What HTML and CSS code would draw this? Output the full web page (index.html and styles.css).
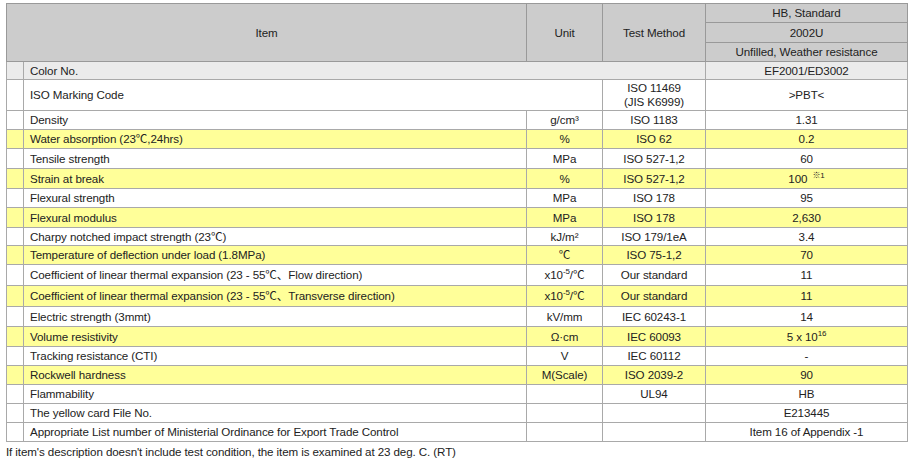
FILE: index.html
```html
<!DOCTYPE html>
<html>
<head>
<meta charset="utf-8">
<link rel="stylesheet" href="styles.css">
</head>
<body>
<div class="wrap">
<table class="spec">
  <colgroup>
    <col class="c-mark"><col class="c-item"><col class="c-unit"><col class="c-test"><col class="c-val">
  </colgroup>
  <thead>
    <tr class="h1">
      <th colspan="2" rowspan="3">Item</th>
      <th rowspan="3">Unit</th>
      <th rowspan="3">Test Method</th>
      <th>HB, Standard</th>
    </tr>
    <tr class="h2"><th>2002U</th></tr>
    <tr class="h3"><th>Unfilled, Weather resistance</th></tr>
  </thead>
  <tbody>
    <tr class="grey r18">
      <td class="mark"></td>
      <td colspan="3" class="item">Color No.</td>
      <td>EF2001/ED3002</td>
    </tr>
    <tr class="tall">
      <td class="mark"></td>
      <td colspan="2" class="item">ISO Marking Code</td>
      <td class="two">ISO 11469<br>(JIS K6999)</td>
      <td>&gt;PBT&lt;</td>
    </tr>
    <tr><td class="mark"></td><td class="item">Density</td><td>g/cm³</td><td>ISO 1183</td><td>1.31</td></tr>
    <tr class="y"><td class="mark"></td><td class="item">Water absorption (23℃,24hrs)</td><td>%</td><td>ISO 62</td><td>0.2</td></tr>
    <tr class="r20"><td class="mark"></td><td class="item">Tensile strength</td><td>MPa</td><td>ISO 527-1,2</td><td>60</td></tr>
    <tr class="y r20"><td class="mark"></td><td class="item">Strain at break</td><td>%</td><td>ISO 527-1,2</td><td>100 <sup class="note">※1</sup></td></tr>
    <tr><td class="mark"></td><td class="item">Flexural strength</td><td>MPa</td><td>ISO 178</td><td>95</td></tr>
    <tr class="y r20"><td class="mark"></td><td class="item">Flexural modulus</td><td>MPa</td><td>ISO 178</td><td>2,630</td></tr>
    <tr class="r18"><td class="mark"></td><td class="item">Charpy notched impact strength (23℃)</td><td>kJ/m²</td><td>ISO 179/1eA</td><td>3.4</td></tr>
    <tr class="y"><td class="mark"></td><td class="item">Temperature of deflection under load (1.8MPa)</td><td>℃</td><td>ISO 75-1,2</td><td>70</td></tr>
    <tr class="r21"><td class="mark"></td><td class="item">Coefficient of linear thermal expansion (23 - 55℃、Flow direction)</td><td>x10<sup>-5</sup>/℃</td><td>Our standard</td><td>11</td></tr>
    <tr class="y r21"><td class="mark"></td><td class="item">Coefficient of linear thermal expansion (23 - 55℃、Transverse direction)</td><td>x10<sup>-5</sup>/℃</td><td>Our standard</td><td>11</td></tr>
    <tr class="r20"><td class="mark"></td><td class="item">Electric strength (3mmt)</td><td>kV/mm</td><td>IEC 60243-1</td><td>14</td></tr>
    <tr class="y r20"><td class="mark"></td><td class="item">Volume resistivity</td><td>Ω·cm</td><td>IEC 60093</td><td>5 x 10<sup>16</sup></td></tr>
    <tr><td class="mark"></td><td class="item">Tracking resistance (CTI)</td><td>V</td><td>IEC 60112</td><td>-</td></tr>
    <tr class="y"><td class="mark"></td><td class="item">Rockwell hardness</td><td>M(Scale)</td><td>ISO 2039-2</td><td>90</td></tr>
    <tr><td class="mark"></td><td class="item">Flammability</td><td></td><td>UL94</td><td>HB</td></tr>
    <tr><td class="mark"></td><td class="item">The yellow card File No.</td><td></td><td></td><td>E213445</td></tr>
    <tr><td class="mark"></td><td class="item">Appropriate List number of Ministerial Ordinance for Export Trade Control</td><td></td><td></td><td>Item 16 of Appendix -1</td></tr>
  </tbody>
</table>
<p class="foot">If item's description doesn't include test condition, the item is examined at 23 deg. C. (RT)</p>
</div>
</body>
</html>
```

FILE: styles.css
```css
html, body {
  margin: 0;
  padding: 0;
  background: #ffffff;
}
body {
  font-family: "Liberation Sans", "Noto Sans CJK JP", sans-serif;
  font-size: 11.6px;
  letter-spacing: -0.1px;
  color: #222222;
}
.wrap {
  padding: 3px 0 0 6px;
}
.spec {
  border-collapse: collapse;
  table-layout: fixed;
  width: 901px;
}
.c-mark { width: 17px; }
.c-item { width: 503px; }
.c-unit { width: 76px; }
.c-test { width: 103px; }
.c-val { width: 202px; }

.spec th,
.spec td {
  border: 1px solid #a9a9a9;
  padding: 0;
  height: 18px;
  line-height: 14px;
  text-align: center;
  vertical-align: middle;
  font-weight: normal;
  white-space: nowrap;
}
.spec th {
  background: #cccccc;
  border-color: #999999;
}
.h2 th { height: 19px; }
.spec td.item {
  text-align: left;
  padding-left: 6px;
}
.grey td { background: #ebebeb; }
.y td { background: #ffff99; }
.tall td { height: 30px; }
.two { line-height: 13px; }
.r18 td { height: 17px; }
.r20 td { height: 19px; }
.r21 td { height: 20px; }
sup {
  font-size: 8px;
  line-height: 0;
  vertical-align: 5px;
}
.note { margin-left: 2px; }
.foot {
  margin: 3px 0 0 0;
  line-height: 14px;
}
```
